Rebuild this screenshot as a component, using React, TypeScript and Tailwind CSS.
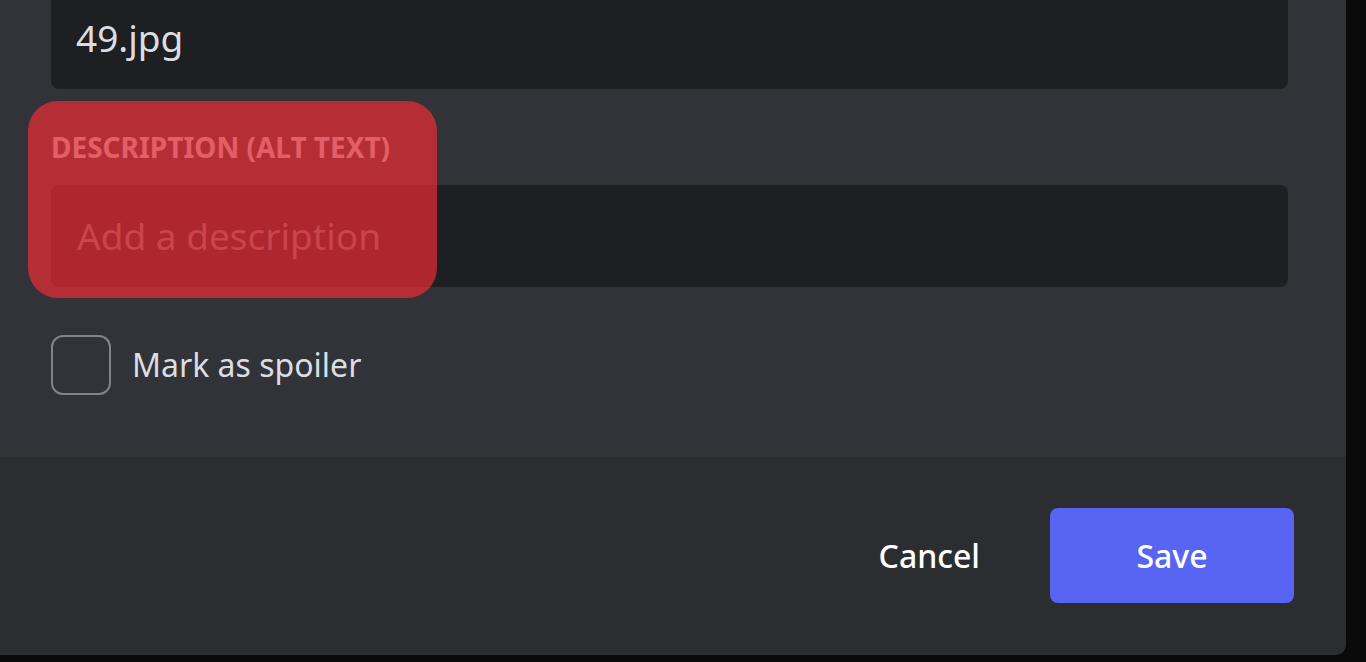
const font = { fontFamily: '"Noto Sans", "Open Sans", sans-serif' };

const App = () => {
  return (
    <div className="w-full h-[662px] bg-[#0a0a0b] overflow-hidden" style={font}>
      <div className="w-[1346px] h-[655px] flex flex-col rounded-br-[10px] overflow-hidden">
        <div className="relative flex-1 bg-[#313338] pl-[51px] pr-[58px]">
          <div className="-mt-[13px] h-[102px] rounded-[8px] bg-[#1e1f22] flex items-center pl-[25px] text-[37px] text-[#dbdee1]">
            49.jpg
          </div>

          <div className="mt-[41px] h-[34px] leading-[34px] text-[28px] font-bold uppercase text-[#b5bac1]">
            Description (alt text)
          </div>

          <div className="mt-[21px] h-[102px] rounded-[8px] bg-[#1e1f22] flex items-center pl-[26px] text-[37px] text-[#6d6f78]">
            Add a description
          </div>

          <div className="mt-[48px] flex items-center gap-[21px]">
            <div className="w-[60px] h-[60px] rounded-[12px] border-2 border-[#80848e]" />
            <span className="text-[32px] text-[#dbdee1]">Mark as spoiler</span>
          </div>

          {/* highlight marker over the alt text field */}
          <div className="absolute left-[28px] top-[101px] w-[409px] h-[197px] rounded-[30px] bg-[rgba(252,45,54,0.65)]" />
        </div>

        <div className="h-[198px] shrink-0 bg-[#2b2d31] flex items-start justify-end pt-[51px] pr-[52px]">
          <button className="h-[95px] px-[36px] mr-[34px] text-[32px] font-medium text-white">Cancel</button>
          <button className="w-[244px] h-[95px] rounded-[8px] bg-[#5865f2] text-[32px] font-medium text-white">
            Save
          </button>
        </div>
      </div>
    </div>
  );
};

export default App;
